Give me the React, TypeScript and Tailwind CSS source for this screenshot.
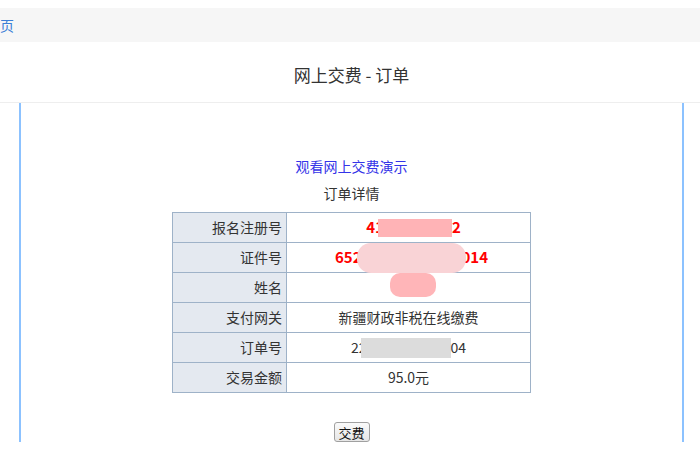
const font = { fontFamily: '"Noto Sans CJK SC", "Noto Sans", sans-serif' };

function Label({ children }: { children: React.ReactNode }) {
  return (
    <td className="w-[114px] h-[30px] bg-[#e4e9f0] border border-[#9eb2c8] text-right pr-[4px] text-[14px] text-[#333] p-0">
      {children}
    </td>
  );
}

function Value({ children }: { children: React.ReactNode }) {
  return (
    <td className="h-[30px] border border-[#9eb2c8] text-center text-[14px] text-[#333] p-0 relative">
      {children}
    </td>
  );
}

export default function App() {
  return (
    <div className="w-[700px] h-[467px] bg-white overflow-hidden" style={font}>
      <div className="pt-[8px]">
        <div className="h-[34px] bg-[#f6f6f6] flex items-center overflow-hidden">
          <a className="ml-[-14px] text-[14px] text-[#3b7fd6] leading-none">首页</a>
        </div>
      </div>
      <div className="h-[61px] flex items-center justify-center pt-[6px] border-b border-[#eeeeee] pl-[3px]">
        <h1 className="text-[17px] text-[#333]">网上交费 - 订单</h1>
      </div>
      <div className="ml-[19px] w-[665px] h-[339px] border-x-2 border-[#8cc2ff] flex flex-col items-center pt-[53px]">
        <a className="text-[14px] leading-[20px] text-[#3434e8]">观看网上交费演示</a>
        <div className="mt-[7px] text-[14px] leading-[20px] text-[#333]">订单详情</div>
        <table className="mt-[9px] w-[359px] border-collapse border border-[#9eb2c8]">
          <tbody>
            <tr>
              <Label>报名注册号</Label>
              <Value>
                <span className="inline-flex items-center text-[15px] font-bold text-[#ff0000] ml-[10px]">
                  41
                  <span className="inline-block w-[74px] h-[18px] bg-[#ffb3b6] ml-[-6px]" />
                  2
                </span>
              </Value>
            </tr>
            <tr>
              <Label>证件号</Label>
              <Value>
                <span className="inline-flex items-center text-[15px] font-bold text-[#ff0000] ml-[6px]">
                  652
                  <span className="inline-block w-[100px] h-[18px]" />
                  014
                </span>
                <span className="absolute left-[70px] top-[0px] w-[109px] h-[30px] rounded-[14px] bg-[#f9d3d6]" />
              </Value>
            </tr>
            <tr>
              <Label>姓名</Label>
              <Value>
                <span className="absolute left-[103px] top-[0px] w-[46px] h-[24px] rounded-[10px] bg-[#ffb5b8]" />
                &nbsp;
              </Value>
            </tr>
            <tr>
              <Label>支付网关</Label>
              <Value>新疆财政非税在线缴费</Value>
            </tr>
            <tr>
              <Label>订单号</Label>
              <Value>
                <span className="inline-flex items-center">
                  22
                  <span className="inline-block w-[90px] h-[20px] bg-[#dcdcdc] ml-[-6px]" />
                  04
                </span>
              </Value>
            </tr>
            <tr>
              <Label>交易金额</Label>
              <Value>95.0元</Value>
            </tr>
          </tbody>
        </table>
        <button className="mt-[29px] w-[36px] h-[20px] border border-[#a0a0a0] rounded-[3px] bg-gradient-to-b from-[#fafafa] to-[#e6e6e6] text-[13px] leading-none text-[#111] flex items-center justify-center">
          交费
        </button>
      </div>
    </div>
  );
}
